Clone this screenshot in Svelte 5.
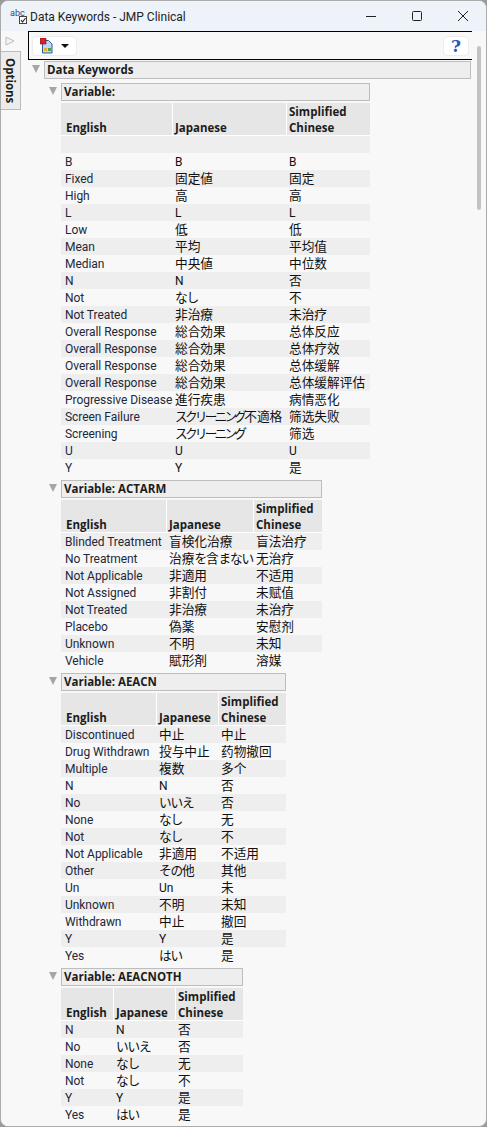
<script>
  const head = ['English', 'Japanese', 'Simplified Chinese'];
  const sections = [
    {
      name: 'Variable:', barW: 309, cols: [112, 114, 83],
      rows: [['', '', ''], ['B', 'B', 'B'], ['Fixed', '固定値', '固定'], ['High', '高', '高'], ['L', 'L', 'L'], ['Low', '低', '低'],
        ['Mean', '平均', '平均值'], ['Median', '中央値', '中位数'], ['N', 'N', '否'], ['Not', 'なし', '不'],
        ['Not Treated', '非治療', '未治疗'], ['Overall Response', '総合効果', '总体反应'], ['Overall Response', '総合効果', '总体疗效'],
        ['Overall Response', '総合効果', '总体缓解'], ['Overall Response', '総合効果', '总体缓解评估'], ['Progressive Disease', '進行疾患', '病情恶化'],
        ['Screen Failure', 'スクリーニング不適格', '筛选失败'], ['Screening', 'スクリーニング', '筛选'], ['U', 'U', 'U'], ['Y', 'Y', '是']]
    },
    {
      name: 'Variable: ACTARM', barW: 261, cols: [106, 87, 68],
      rows: [['Blinded Treatment', '盲検化治療', '盲法治疗'], ['No Treatment', '治療を含まない', '无治疗'], ['Not Applicable', '非適用', '不适用'],
        ['Not Assigned', '非割付', '未赋值'], ['Not Treated', '非治療', '未治疗'], ['Placebo', '偽薬', '安慰剂'], ['Unknown', '不明', '未知'], ['Vehicle', '賦形剤', '溶媒']]
    },
    {
      name: 'Variable: AEACN', barW: 225, cols: [96, 62, 67],
      rows: [['Discontinued', '中止', '中止'], ['Drug Withdrawn', '投与中止', '药物撤回'], ['Multiple', '複数', '多个'], ['N', 'N', '否'], ['No', 'いいえ', '否'],
        ['None', 'なし', '无'], ['Not', 'なし', '不'], ['Not Applicable', '非適用', '不适用'], ['Other', 'その他', '其他'], ['Un', 'Un', '未'],
        ['Unknown', '不明', '未知'], ['Withdrawn', '中止', '撤回'], ['Y', 'Y', '是'], ['Yes', 'はい', '是']]
    },
    {
      name: 'Variable: AEACNOTH', barW: 182, cols: [53, 62, 67],
      rows: [['N', 'N', '否'], ['No', 'いいえ', '否'], ['None', 'なし', '无'], ['Not', 'なし', '不'], ['Y', 'Y', '是'], ['Yes', 'はい', '是']]
    }
  ];
  const isCjk = (t) => /[^\x00-\x7f]/.test(t);
  // the kana in the reference are much narrower than the kanji
  const parts = (t) => t.split(/([ァ-ヶー]+|[ぁ-ん]+)/).filter(Boolean);
  const kanaClass = (p) => (/^[ァ-ヶー]/.test(p) ? 'kata' : /^[ぁ-ん]/.test(p) ? 'hira' : '');
</script>

<div class="window">
  <div class="titlebar">
    <svg class="appicon" width="20" height="20" viewBox="0 0 20 20">
      <text x="0" y="10" class="abc">abc</text>
      <rect x="9.5" y="10.5" width="7" height="7" fill="#fff" stroke="#444" />
      <path d="M11 14l1.5 2 3-4" fill="none" stroke="#222" stroke-width="1.1" />
    </svg>
    <span class="title">Data Keywords - JMP Clinical</span>
    <div class="controls">
      <svg width="12" height="12" viewBox="0 0 12 12"><path d="M1 6.5h10" stroke="#222" /></svg>
      <svg width="12" height="12" viewBox="0 0 12 12"><rect x="1.5" y="1.5" width="9" height="9" rx="1" fill="none" stroke="#222" /></svg>
      <svg width="12" height="12" viewBox="0 0 12 12"><path d="M1 1l10 10M11 1L1 11" stroke="#222" fill="none" /></svg>
    </div>
  </div>

  <div class="main">
    <div class="side">
      <svg class="sidearrow" width="10" height="10" viewBox="0 0 10 10"><path d="M1 1l8 4-8 4z" fill="#f4f4f4" stroke="#bbb" /></svg>
      <div class="tab"><span>Options</span></div>
    </div>

    <div class="content">
      <div class="toolbar">
        <div class="tbtn menu">
          <svg width="14" height="16" viewBox="0 0 14 16">
            <path d="M2.5 2.5h6l3.5 3.5v9h-9.5z" fill="#bcd8f4" stroke="#2a5a9c" />
            <rect x="4" y="10" width="3" height="3" fill="#e8b030" />
            <rect x="8" y="10" width="3" height="3" fill="#50a050" />
            <rect x="0" y="0" width="6" height="6" fill="#d8202c" stroke="#8c1018" stroke-width="0.6" />
          </svg>
          <span class="caret"></span>
        </div>
        <div class="tbtn help">?</div>
      </div>

      <div class="scrollarea">
        <div class="outline top">
          <span class="tri"></span>
          <div class="bar">Data Keywords</div>
        </div>

        {#each sections as s}
          <div class="section">
            <div class="outline">
              <span class="tri"></span>
              <div class="bar" style="width: {s.barW}px">{s.name}</div>
            </div>
            <div class="grid" style="width: {s.barW}px; grid-template-columns: {s.cols[0]}px {s.cols[1]}px {s.cols[2]}px">
              {#each head as h}
                <div class="hd"><span>{h}</span></div>
              {/each}
              {#each s.rows as r, i}
                <div class="cell en" class:odd={i % 2 === 0}>{r[0]}</div>
                <div class="cell ja" class:odd={i % 2 === 0} class:cjk={isCjk(r[1])} lang="ja">{#each parts(r[1]) as p}<span class={kanaClass(p)}>{p}</span>{/each}</div>
                <div class="cell zh" class:odd={i % 2 === 0} class:cjk={isCjk(r[2])} lang="zh-CN">{r[2]}</div>
              {/each}
            </div>
          </div>
        {/each}
      </div>

      <div class="scrollbar"></div>
    </div>
  </div>
</div>

<style>
  :global(body) {
    margin: 0;
    background: #9a9a9a;
  }
  .window {
    box-sizing: border-box;
    width: 487px;
    height: 1127px;
    border: 1px solid #ababab;
    border-radius: 8px;
    background: #f8f8f8;
    overflow: hidden;
    font-family: Roboto, "Open Sans", sans-serif;
    color: #1c1c1c;
    display: flex;
    flex-direction: column;
  }
  .titlebar {
    height: 30px;
    flex: none;
    background: #eef3fa;
    display: flex;
    align-items: center;
    padding-left: 9px;
  }
  .abc {
    font-size: 9px;
    fill: #2b4a8c;
  }
  .title {
    font-size: 12px;
    color: #222;
    padding-top: 2px;
  }
  .controls {
    margin-left: auto;
    display: flex;
    gap: 34px;
    padding-right: 17px;
  }
  .main {
    flex: 1;
    display: flex;
    min-height: 0;
  }
  .side {
    width: 27px;
    flex: none;
    background: #f8f8f8;
    padding-top: 5px;
  }
  .sidearrow {
    display: block;
    margin-left: 4px;
  }
  .tab {
    box-sizing: border-box;
    width: 20px;
    height: 59px;
    margin-top: 5px;
    background: #ececec;
    border: 1px solid #bcbcbc;
    border-left: none;
    display: flex;
    align-items: center;
    justify-content: center;
  }
  .tab span {
    writing-mode: vertical-rl;
    font-family: "Open Sans", sans-serif;
    font-size: 11.5px;
    font-weight: 700;
  }
  .content {
    flex: 1;
    position: relative;
    min-width: 0;
  }
  .toolbar {
    box-sizing: border-box;
    height: 29px;
    width: 444px;
    border: 1px solid #000;
    border-width: 1px 0 1px 1px;
    display: flex;
    justify-content: space-between;
    align-items: center;
    padding: 0 3px 0 3px;
    background: #f8f8f8;
  }
  .tbtn {
    background: #fff;
    border: 1px solid #ececec;
    border-radius: 4px;
    height: 20px;
    box-sizing: border-box;
    display: flex;
    align-items: center;
    justify-content: center;
  }
  .menu {
    width: 45px;
    gap: 7px;
  }
  .caret {
    border: 4px solid transparent;
    border-top: 4px solid #111;
    border-bottom: none;
  }
  .help {
    width: 26px;
    font: 900 17px "DejaVu Serif", serif;
    color: #2858b8;
  }
  .scrollarea {
    padding: 1px 0 0 4px;
  }
  .section {
    margin-top: 4px;
  }
  .outline {
    display: flex;
    align-items: center;
    gap: 4px;
    height: 18px;
    padding-left: 17px;
  }
  .outline.top {
    padding-left: 0;
  }
  .tri {
    flex: none;
    width: 0;
    height: 0;
    border-left: 4.5px solid transparent;
    border-right: 4.5px solid transparent;
    border-top: 8px solid #a6a6a6;
    margin-top: -3px;
  }
  .bar {
    box-sizing: border-box;
    height: 18px;
    line-height: 15px;
    width: 427px;
    background: #eeeeee;
    border: 1px solid #bdbdbd;
    padding-left: 2px;
    font-family: "Open Sans", sans-serif;
    font-size: 11.5px;
    font-weight: 700;
    white-space: nowrap;
  }
  .grid {
    display: grid;
    margin-left: 29px;
    margin-top: 2px;
  }
  .hd {
    box-sizing: border-box;
    height: 33px;
    background: #e6e6e6;
    border-right: 1px solid #fff;
    border-bottom: 1px solid #fff;
    padding-left: 2px;
    font-family: "Open Sans", sans-serif;
    font-size: 11.5px;
    font-weight: 700;
    line-height: 16px;
    display: flex;
    align-items: flex-end;
  }
  .hd span {
    margin-bottom: -1px;
  }
  .hd:nth-child(1) {
    padding-left: 5px;
  }
  .hd:nth-child(3) {
    border-right: none;
  }
  .cell {
    height: 17px;
    line-height: 19px;
    padding-left: 2px;
    font-size: 12px;
    white-space: nowrap;
    color: #111;
  }
  .odd {
    background: #eeeeee;
  }
  .en {
    padding-left: 4px;
    color: #22283a;
    letter-spacing: -0.05px;
  }
  .ja {
    font-family: Roboto, "Noto Sans CJK JP", sans-serif;
  }
  .zh {
    font-family: Roboto, "Noto Sans CJK SC", sans-serif;
  }
  .cjk {
    font-size: 12.7px;
    line-height: 17px;
  }
  .kata {
    letter-spacing: -2.8px;
  }
  .hira {
    letter-spacing: -1.2px;
  }
  .scrollbar {
    position: absolute;
    top: 15px;
    left: 449px;
    width: 4px;
    height: 164px;
    border-radius: 2px;
    background: #c2c2c2;
  }
</style>
